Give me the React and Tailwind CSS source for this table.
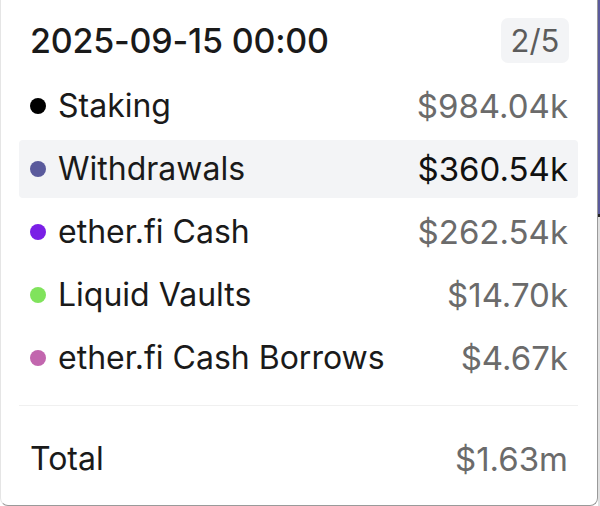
import React from "react";

const rows = [
  { label: "Staking", value: "$984.04k", color: "bg-[#000000]", active: false },
  { label: "Withdrawals", value: "$360.54k", color: "bg-[#5a5a9c]", active: true },
  { label: "ether.fi Cash", value: "$262.54k", color: "bg-[#7a1fe6]", active: false },
  { label: "Liquid Vaults", value: "$14.70k", color: "bg-[#80e35c]", active: false },
  { label: "ether.fi Cash Borrows", value: "$4.67k", color: "bg-[#c266ae]", active: false },
];

export default function App() {
  return (
    <div
      className="flex h-[506px] w-[600px] bg-white"
      style={{ fontFamily: "Inter, 'Liberation Sans', sans-serif" }}
    >
      <div className="flex h-[506px] w-[598px] flex-col rounded-b-[8px] border-b border-l border-r border-b-[#9a9a9a] border-l-[#e5e5e5] border-r-[#9a9a9a] bg-white pl-[18px] pr-[19px]">
        <div className="flex h-[77px] items-start justify-between pt-[18px] pl-[11px] pr-[9px]">
          <div className="flex h-[45px] items-center text-[34px] font-medium leading-none text-[#1a1a1a] tracking-[-0.2px]">
            2025-09-15 00:00
          </div>
          <div className="flex h-[45px] w-[68px] items-center justify-center rounded-[7px] bg-[#f3f4f6] text-[31px] leading-none text-[#5c5c5c]">
            2/5
          </div>
        </div>
        <div className="flex flex-col gap-[5px]">
          {rows.map((r) => (
            <div
              key={r.label}
              className={
                "flex h-[58px] items-center justify-between rounded-[4px] pl-[11px] pr-[10px] " +
                (r.active ? "bg-[#f3f4f6]" : "")
              }
            >
              <div className="flex items-center gap-[12px]">
                <span className={"h-[16px] w-[16px] rounded-full " + r.color} />
                <span className="text-[32px] leading-none text-[#1a1a1a]">{r.label}</span>
              </div>
              <span
                className={
                  "text-[33px] leading-none " +
                  (r.active ? "text-[#111111]" : "text-[#6b6b6b]")
                }
              >
                {r.value}
              </span>
            </div>
          ))}
        </div>
        <div className="mt-[18px] h-px bg-[#f0f0f0]" />
        <div className="mt-[24px] flex h-[58px] items-center justify-between pl-[11px] pr-[10px]">
          <span className="text-[32px] leading-none text-[#1a1a1a]">Total</span>
          <span className="text-[33px] leading-none text-[#6b6b6b]">$1.63m</span>
        </div>
      </div>
      <div className="flex w-[2px] flex-col">
        <div className="h-[214px] bg-[#5a5a9c]" />
        <div className="h-[3px] bg-[#222222]" />
        <div className="flex-1 bg-[#e0e0e0]" />
      </div>
    </div>
  );
}
